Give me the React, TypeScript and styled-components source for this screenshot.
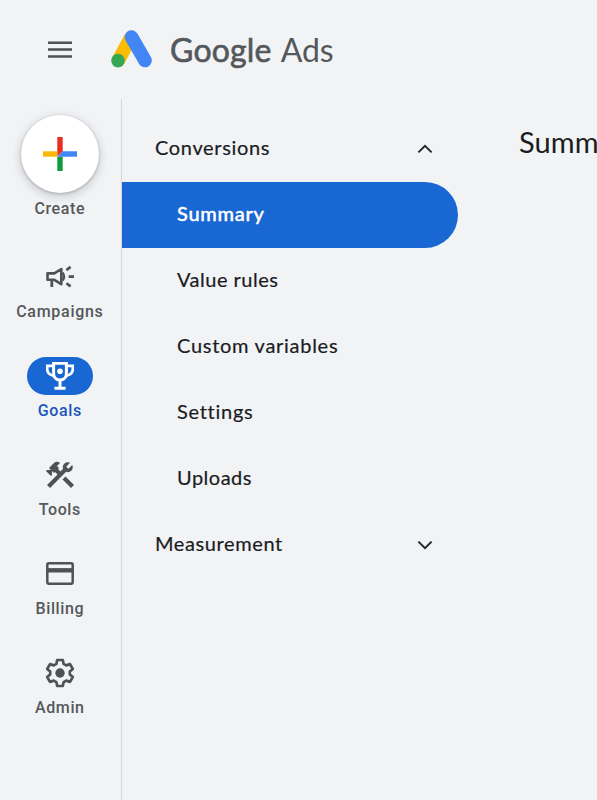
import React from 'react';
import styled, { createGlobalStyle } from 'styled-components';
import { MdConstruction } from 'react-icons/md';

const GlobalStyle = createGlobalStyle`
  * { box-sizing: border-box; }
  html, body, #root { height: 100%; }
  body {
    margin: 0;
    background: #f1f3f5;
    overflow: hidden;
    font-family: Lato, 'Open Sans', sans-serif;
    color: #1b1c1f;
  }
  button { font: inherit; color: inherit; border: 0; background: none; padding: 0; }
`;

const Shell = styled.div`
  height: 800px;
  display: flex;
  flex-direction: column;
  overflow: hidden;
`;

const TopBar = styled.header`
  height: 99px;
  flex: none;
  display: flex;
  align-items: flex-start;
`;

const MenuButton = styled.button`
  margin: 40px 0 0 47px;
  width: 26px;
  height: 20px;
  display: flex;
`;

const Logo = styled.svg`
  margin: 29px 0 0 37px;
  width: 43px;
  height: 39px;
`;

const Brand = styled.div`
  margin: 30px 0 0 17px;
  display: flex;
  font-size: 32px;
  line-height: 40px;
  color: #54575b;
  white-space: nowrap;
`;

const BrandStrong = styled.span`
  font-weight: 400;
  letter-spacing: 0.2px;
  -webkit-text-stroke: 0.6px #54575b;
`;

const BrandLight = styled.span`
  margin-left: 9px;
  letter-spacing: -0.1px;
`;

const Body = styled.div`
  flex: 1;
  display: flex;
  min-height: 0;
`;

const Rail = styled.nav`
  width: 122px;
  flex: none;
  border-right: 1px solid #d5d7da;
  padding: 16px 2px 0 0;
  display: flex;
  flex-direction: column;
  align-items: center;
`;

const RailItem = styled.button<{ $tall?: boolean; $active?: boolean }>`
  height: ${(p) => (p.$tall ? 142.5 : 99)}px;
  flex: none;
  display: flex;
  flex-direction: column;
  align-items: center;
  color: ${(p) => (p.$active ? '#1a56bd' : '#55585b')};
`;

const CreateDisc = styled.span`
  width: 78px;
  height: 78px;
  border-radius: 50%;
  background: #fff;
  box-shadow: 0 1px 3px rgba(60, 64, 67, 0.32), 0 3px 8px 2px rgba(60, 64, 67, 0.16);
  display: flex;
  align-items: center;
  justify-content: center;
`;

const IconPill = styled.span<{ $active?: boolean }>`
  width: 66px;
  height: 38px;
  border-radius: 19px;
  display: flex;
  align-items: center;
  justify-content: center;
  background: ${(p) => (p.$active ? '#1967d2' : 'transparent')};
  color: ${(p) => (p.$active ? '#fff' : '#4f5255')};
`;

const RailLabel = styled.span<{ $track: number }>`
  margin-top: 6px;
  font-family: Roboto, sans-serif;
  font-weight: 500;
  font-size: 16px;
  line-height: 20px;
  letter-spacing: ${(p) => p.$track}px;
  margin-right: ${(p) => -p.$track}px;
`;

const SideNav = styled.nav`
  width: 336px;
  flex: none;
  padding-top: 16.5px;
  display: flex;
  flex-direction: column;
`;

const NavRow = styled.button<{ $child?: boolean; $selected?: boolean; $track: number }>`
  height: 66px;
  flex: none;
  display: flex;
  align-items: center;
  justify-content: space-between;
  padding: 0 25px 0 ${(p) => (p.$child ? 55 : 33)}px;
  border-radius: 0 33px 33px 0;
  background: ${(p) => (p.$selected ? '#1967d2' : 'transparent')};
  color: ${(p) => (p.$selected ? '#fff' : '#1b1c1f')};
  font-size: 20px;
  line-height: 24px;
  font-weight: ${(p) => (p.$selected ? 500 : 400)};
  letter-spacing: ${(p) => p.$track}px;
  -webkit-text-stroke: ${(p) => (p.$selected ? 0.4 : 0.2)}px currentColor;
  text-align: left;
`;

const NavLabel = styled.span`
  padding-bottom: 3px;
`;

const Main = styled.main`
  flex: 1;
  min-width: 0;
  overflow: hidden;
  padding: 25px 0 0 61px;
`;

const Title = styled.h1`
  margin: 0;
  font-size: 29px;
  line-height: 36px;
  font-weight: 400;
  white-space: nowrap;
  letter-spacing: 0.1px;
`;

const MenuIcon = () => (
  <svg width="26" height="20" viewBox="0 0 26 20">
    <path d="M1 2.7h24M1 9.6h24M1 16.5h24" stroke="#4d5054" strokeWidth="2.5" />
  </svg>
);

const AdsLogo = () => (
  <Logo viewBox="0 0 43 39">
    <path d="M8 32 21 8" stroke="#fbbc04" strokeWidth="13.5" />
    <path d="M21.5 8 35 31.5" stroke="#4285f4" strokeWidth="13.6" strokeLinecap="round" />
    <circle cx="8" cy="31.6" r="6.8" fill="#34a853" />
  </Logo>
);

const PlusIcon = () => (
  <svg width="34" height="34" viewBox="0 0 34 34">
    <path d="M14.3 0h5.4v14.3l-5.4 5.4z" fill="#ea2d20" />
    <path d="M0 14.3h14.3v5.4H0z" fill="#f9b90a" />
    <path d="M14.3 19.7h5.4V34h-5.4z" fill="#109b3b" />
    <path d="M19.7 14.3H34v5.4H14.3z" fill="#4285f4" />
  </svg>
);

const CampaignIcon = () => (
  <svg width="28" height="24" viewBox="0 0 28 24" fill="none" stroke="currentColor" strokeWidth="2.6">
    <path d="M1.5 8.4h6.8l7-4.4v15.2l-7-4.4H1.5z" strokeLinejoin="round" />
    <path d="M5.8 15v7" strokeWidth="2.8" />
    <path d="M16.6 7.6c1.6 2.3 1.6 5.7 0 8" strokeWidth="2.4" />
    <path d="m20.4 5.1 4.2-3.2M22.7 11.6H28M20.4 18.2l4.2 3.2" />
  </svg>
);

const TrophyIcon = () => (
  <svg width="28" height="28" viewBox="0 0 28 28" fill="none" stroke="currentColor">
    <path d="M7.6 1.2h12.8v10.4c0 3.8-2.6 6.4-6.4 6.4s-6.4-2.6-6.4-6.4z" strokeWidth="3" />
    <path d="M7.5 3.8H1.2v3.4c0 3.8 2.7 6 7.4 6.9M20.5 3.8h6.3v3.4c0 3.8-2.7 6-7.4 6.9" strokeWidth="2.7" />
    <path d="M14 18v7M8.4 26.2h11.2" strokeWidth="3" />
    <circle cx="14" cy="9.2" r="2.8" fill="currentColor" stroke="none" />
  </svg>
);

const ToolsIcon = styled(MdConstruction)`
  width: 34px;
  height: 34px;
`;

const CardIcon = () => (
  <svg width="28" height="23" viewBox="0 0 28 23">
    <rect x="1.3" y="1.3" width="25.4" height="20.4" rx="1.6" fill="none" stroke="currentColor" strokeWidth="2.5" />
    <path d="M1 8.3h26" stroke="currentColor" strokeWidth="4.4" />
  </svg>
);

const GearIcon = () => (
  <svg width="30" height="30" viewBox="0 0 30 30">
    <path
      d="M12.2 2h5.6l.8 3.9 2.6 1.5 3.8-1.3 2.8 4.9-3 2.5v3l3 2.5-2.8 4.9-3.8-1.3-2.6 1.5-.8 3.9h-5.6l-.8-3.9-2.6-1.5L5 23.9 2.2 19l3-2.5v-3l-3-2.5L5 6.1l3.8 1.3 2.6-1.5z"
      fill="none"
      stroke="currentColor"
      strokeWidth="2.7"
      strokeLinejoin="round"
    />
    <circle cx="15" cy="15" r="4.7" fill="currentColor" />
  </svg>
);

const Chevron = ({ up }: { up?: boolean }) => (
  <svg width="16" height="10" viewBox="0 0 16 10" fill="none" stroke="#25272a" strokeWidth="2">
    <path d={up ? 'M1.4 8.4 8 1.8l6.6 6.6' : 'M1.4 1.6 8 8.2l6.6-6.6'} />
  </svg>
);

const railItems = [
  { label: 'Campaigns', track: 0.72, icon: <CampaignIcon /> },
  { label: 'Goals', track: 0.6, icon: <TrophyIcon />, active: true },
  { label: 'Tools', track: 0.6, icon: <ToolsIcon /> },
  { label: 'Billing', track: 0.6, icon: <CardIcon /> },
  { label: 'Admin', track: 0.6, icon: <GearIcon /> },
];

const conversionItems = [
  { label: 'Summary', track: 0.7, selected: true },
  { label: 'Value rules', track: 0.5 },
  { label: 'Custom variables', track: 0.72 },
  { label: 'Settings', track: 0.72 },
  { label: 'Uploads', track: 0.5 },
];

export default function App() {
  return (
    <Shell>
      <GlobalStyle />
      <TopBar>
        <MenuButton aria-label="Menu"><MenuIcon /></MenuButton>
        <AdsLogo />
        <Brand>
          <BrandStrong>Google</BrandStrong>
          <BrandLight>Ads</BrandLight>
        </Brand>
      </TopBar>
      <Body>
        <Rail>
          <RailItem $tall>
            <CreateDisc><PlusIcon /></CreateDisc>
            <RailLabel $track={0.6}>Create</RailLabel>
          </RailItem>
          {railItems.map((item) => (
            <RailItem key={item.label} $active={item.active}>
              <IconPill $active={item.active}>{item.icon}</IconPill>
              <RailLabel $track={item.track}>{item.label}</RailLabel>
            </RailItem>
          ))}
        </Rail>
        <SideNav>
          <NavRow $track={0.65}><NavLabel>Conversions</NavLabel><Chevron up /></NavRow>
          {conversionItems.map((item) => (
            <NavRow key={item.label} $child $selected={item.selected} $track={item.track}>
              <NavLabel>{item.label}</NavLabel>
            </NavRow>
          ))}
          <NavRow $track={0.6}><NavLabel>Measurement</NavLabel><Chevron /></NavRow>
        </SideNav>
        <Main>
          <Title>Summary</Title>
        </Main>
      </Body>
    </Shell>
  );
}
